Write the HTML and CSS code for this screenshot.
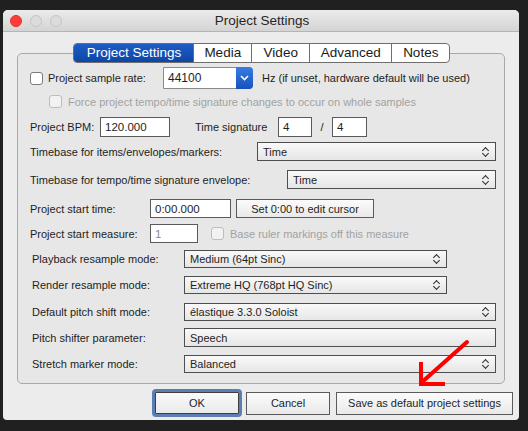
FILE: index.html
```html
<!DOCTYPE html>
<html>
<head>
<meta charset="utf-8">
<title>Project Settings</title>
<link rel="stylesheet" href="styles.css">
</head>
<body>
<div class="window">
  <div class="titlebar">
    <div class="lights">
      <span class="light close"></span>
      <span class="light"></span>
      <span class="light"></span>
    </div>
    <div class="title">Project Settings</div>
  </div>
  <div class="content">
    <div class="tabs">
      <span class="tab active">Project Settings</span>
      <span class="tab">Media</span>
      <span class="tab">Video</span>
      <span class="tab">Advanced</span>
      <span class="tab">Notes</span>
    </div>
    <div class="group">
      <div class="row r1">
        <span class="check"></span>
        <span class="lbl srate">Project sample rate:</span>
        <span class="combo"><span class="combo-text">44100</span><span class="combo-btn"><svg width="9" height="6" viewBox="0 0 9 6"><path d="M1 1 L4.5 4.5 L8 1" fill="none" stroke="#fff" stroke-width="1.6"/></svg></span></span>
        <span class="hint">Hz (if unset, hardware default will be used)</span>
      </div>
      <div class="row r2">
        <span class="check disabled"></span>
        <span class="lbl dim">Force project tempo/time signature changes to occur on whole samples</span>
      </div>
      <div class="row r3">
        <span class="lbl w-bpm">Project BPM:</span>
        <span class="field w70">120.000</span>
        <span class="lbl w-ts">Time signature</span>
        <span class="field w34">4</span>
        <span class="slash">/</span>
        <span class="field w35">4</span>
      </div>
      <div class="row r4">
        <span class="lbl w227">Timebase for items/envelopes/markers:</span>
        <span class="select w239">Time<i class="updown"></i></span>
      </div>
      <div class="row r5">
        <span class="lbl w257">Timebase for tempo/time signature envelope:</span>
        <span class="select w209">Time<i class="updown"></i></span>
      </div>
      <div class="row r6">
        <span class="lbl w120">Project start time:</span>
        <span class="field w81">0:00.000</span>
        <span class="button set">Set 0:00 to edit cursor</span>
      </div>
      <div class="row r7">
        <span class="lbl w120">Project start measure:</span>
        <span class="field w48 grey">1</span>
        <span class="check disabled base"></span>
        <span class="lbl dim">Base ruler markings off this measure</span>
      </div>
      <div class="row r8 ind">
        <span class="lbl w152">Playback resample mode:</span>
        <span class="select w263">Medium (64pt Sinc)<i class="updown"></i></span>
      </div>
      <div class="row r9 ind">
        <span class="lbl w152">Render resample mode:</span>
        <span class="select w263">Extreme HQ (768pt HQ Sinc)<i class="updown"></i></span>
      </div>
      <div class="row r10 ind">
        <span class="lbl w152">Default pitch shift mode:</span>
        <span class="select w312">élastique 3.3.0 Soloist<i class="updown"></i></span>
      </div>
      <div class="row r11 ind">
        <span class="lbl w152">Pitch shifter parameter:</span>
        <span class="select w312 plain">Speech</span>
      </div>
      <div class="row r12 ind">
        <span class="lbl w152">Stretch marker mode:</span>
        <span class="select w312">Balanced<i class="updown"></i></span>
      </div>
    </div>
    <div class="buttons">
      <span class="button ok">OK</span>
      <span class="button cancel">Cancel</span>
      <span class="button save">Save as default project settings</span>
    </div>
  </div>
  <svg class="pointer" width="60" height="50" viewBox="0 0 60 50">
    <path d="M52 3 L6 44" stroke="#ff0000" stroke-width="4" fill="none" stroke-linecap="round"/>
    <path d="M6 25 L6 45 L28 45" stroke="#ff0000" stroke-width="4" fill="none" stroke-linecap="square"/>
  </svg>
</div>
</body>
</html>
```
FILE: styles.css
```css
* { box-sizing: border-box; }

html, body {
  margin: 0;
  padding: 0;
  background: #202020;
  width: 528px;
  height: 431px;
  overflow: hidden;
}

body {
  font-family: "Liberation Sans", Arial, sans-serif;
  font-size: 11px;
  color: #1e1e1e;
  padding: 10px 0 0 3px;
}

.window {
  position: relative;
  width: 516px;
  height: 410px;
  background: #ececec;
  border-radius: 5px 5px 4px 4px;
  overflow: hidden;
}

/* title bar */
.titlebar {
  position: relative;
  height: 22px;
  background: linear-gradient(#ebebeb, #d4d4d4);
  border-bottom: 1px solid #b4b4b4;
  display: flex;
  align-items: center;
  justify-content: center;
}

.lights {
  position: absolute;
  left: 7px;
  top: 5px;
  display: flex;
  gap: 8px;
}

.light {
  width: 12px;
  height: 12px;
  border-radius: 50%;
  border: 1px solid #c3c3c3;
  background: #dcdcdc;
}

.light.close {
  background: #fc3d39;
  border-color: #e0302c;
}

.title {
  font-size: 13.5px;
  color: #262626;
  margin-left: 2px;
}

/* body */
.content {
  padding: 11px 14px 0 14px;
  display: flex;
  flex-direction: column;
}

.tabs {
  position: relative;
  z-index: 1;
  align-self: center;
  display: flex;
  height: 20px;
  margin-bottom: -10px;
  margin-left: 1px;
  border: 1px solid #6e6e6e;
  border-radius: 4px;
  background: #fff;
  overflow: hidden;
}

.tab {
  font-size: 13.5px;
  padding: 0 10px;
  line-height: 18px;
  border-left: 1px solid #6e6e6e;
  color: #1a1a1a;
}

.tab:first-child { border-left: none; }

.tab.active {
  background: linear-gradient(#1d5cc4, #0e46a6);
  color: #fff;
  padding: 0 12px 0 13px;
}

.tab:nth-child(2) { width: 58px; text-align: center; padding: 0; }
.tab:nth-child(3) { width: 58px; text-align: center; padding: 0; }
.tab:nth-child(4) { width: 82px; text-align: center; padding: 0; }
.tab:nth-child(5) { width: 58px; text-align: center; padding: 0; }

.group {
  height: 331px;
  border: 1px solid #a9a9a9;
  border-radius: 5px;
  background: #e7e7e7;
  padding: 13px 8px 0 12px;
  display: flex;
  flex-direction: column;
}

.row {
  display: flex;
  align-items: center;
  white-space: nowrap;
}

.r1 { height: 22px; }
.r2 { height: 15px; margin-top: 5px; padding-left: 19px; }
.r3 { height: 20px; margin-top: 8px; }
.r4 { height: 19px; margin-top: 5px; }
.r5 { height: 19px; margin-top: 9px; }
.r6 { height: 19px; margin-top: 10px; }
.r7 { height: 19px; margin-top: 6px; }
.r8 { height: 18px; margin-top: 7px; }
.r9 { height: 18px; margin-top: 8px; }
.r10 { height: 18px; margin-top: 9px; }
.r11 { height: 19px; margin-top: 7px; }
.r12 { height: 18px; margin-top: 8px; }

.ind { padding-left: 2px; }

.lbl { display: inline-block; }
.dim { color: #a2a2a2; }

.srate { margin-left: 5px; width: 115px; }
.w-bpm { width: 70px; }
.w-ts { margin-left: 25px; width: 83px; }
.w227 { width: 227px; }
.w257 { width: 257px; }
.w120 { width: 120px; }
.w152 { width: 152px; }

.check {
  width: 13px;
  height: 13px;
  border: 1px solid #7b7b7b;
  border-radius: 3px;
  background: #fff;
  flex: none;
}

.check.disabled {
  border-color: #bdbdbd;
  background: #f2f2f2;
  margin-right: 6px;
}

.check.base { margin-left: 13px; }

/* sample rate combo */
.combo {
  display: flex;
  width: 90px;
  height: 22px;
  border: 1px solid #8a8a8a;
  border-radius: 0 4px 4px 0;
  background: #fff;
}

.combo-text {
  flex: 1;
  padding-left: 4px;
  line-height: 20px;
  font-size: 12px;
}

.combo-btn {
  width: 17px;
  margin: -1px -1px -1px 0;
  border-radius: 0 4px 4px 0;
  background: linear-gradient(#3a7ce4, #1551bd);
  display: flex;
  align-items: center;
  justify-content: center;
}

.hint { margin-left: 9px; }

/* text fields */
.field {
  height: 100%;
  border: 1px solid #5a5a5a;
  background: #fff;
  padding-left: 4px;
  line-height: 18px;
  font-size: 11.5px;
}

.field.grey { color: #8a8a8a; }

.w70 { width: 70px; }
.w34 { width: 34px; }
.w35 { width: 35px; }
.w81 { width: 81px; }
.w48 { width: 48px; }

.slash { width: 20px; text-align: center; }

/* popup selects */
.select {
  position: relative;
  height: 100%;
  border: 1px solid #4e4e4e;
  background: linear-gradient(#f9f9f9, #e6e6e6);
  padding-left: 5px;
  display: flex;
  align-items: center;
}

.w239 { width: 239px; }
.w209 { width: 209px; }
.w263 { width: 263px; }
.w312 { width: 312px; }

.updown {
  position: absolute;
  right: 5px;
  top: 50%;
  width: 8px;
  height: 11px;
  margin-top: -6px;
}

.updown::before,
.updown::after {
  content: "";
  position: absolute;
  left: 1px;
  width: 4px;
  height: 4px;
  border-left: 1.4px solid #2b2b2b;
  border-top: 1.4px solid #2b2b2b;
}

.updown::before { top: 2px; transform: rotate(45deg); }
.updown::after { bottom: 1px; transform: rotate(225deg); }

/* buttons */
.button {
  display: flex;
  align-items: center;
  justify-content: center;
  flex: none;
  height: 23px;
  border: 1px solid #5a5a5a;
  background: linear-gradient(#fbfbfb, #e9e9e9);
}

.set { width: 138px; margin-left: 5px; height: 100%; }

.buttons {
  display: flex;
  align-items: center;
  margin-top: 5px;
  padding-left: 135px;
}

.ok {
  width: 90px;
  height: 28px;
  border: 3px solid #5b7eb3;
  border-radius: 4px;
  box-shadow: inset 0 0 0 1px #3e3e3e;
}

.cancel { width: 84px; margin-left: 4px; }
.save { width: 177px; margin-left: 6px; }

/* annotation arrow drawn over the dialog */
.pointer {
  position: absolute;
  left: 412px;
  top: 329px;
}
```
